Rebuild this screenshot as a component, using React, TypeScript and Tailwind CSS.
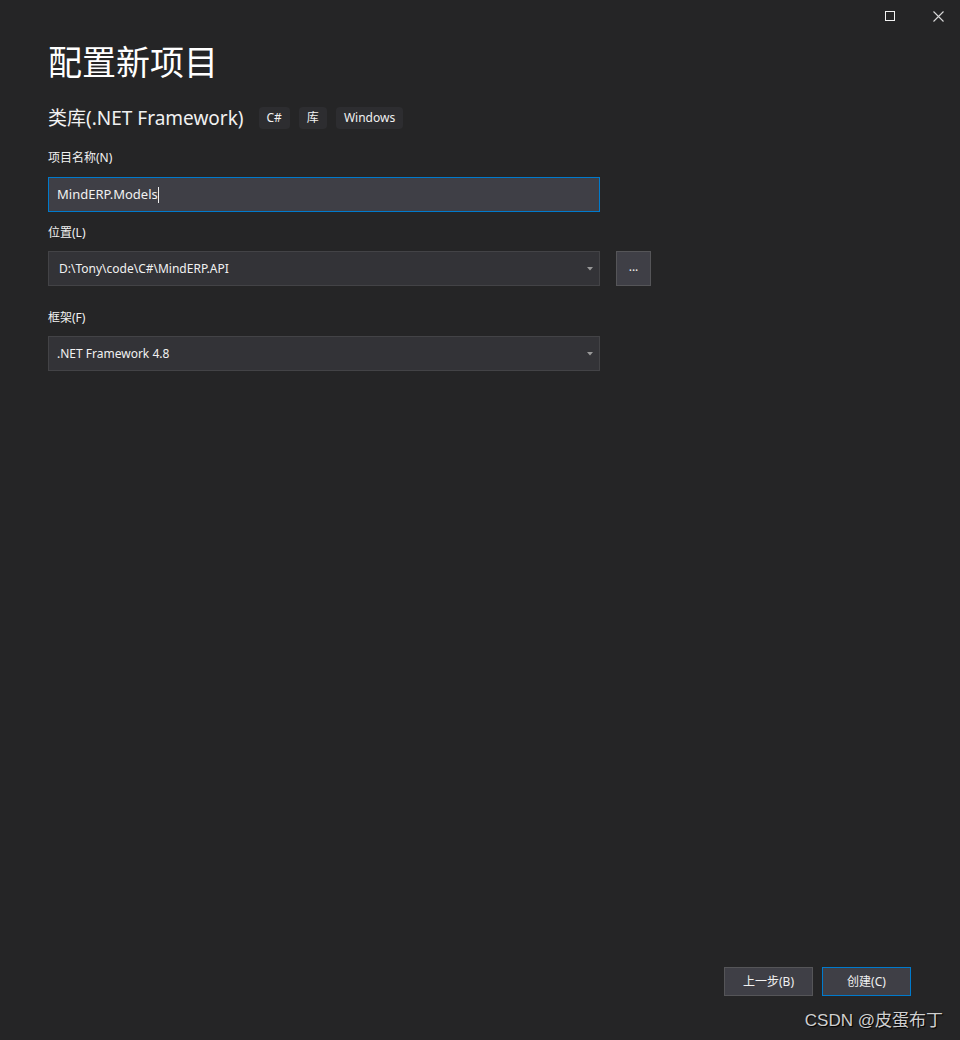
const font = { fontFamily: '"Noto Sans", "Noto Sans CJK SC", sans-serif' }

function Tag({ children }: { children: React.ReactNode }) {
  return (
    <span className="h-[22px] px-[8px] rounded-[4px] bg-[#2d2d30] text-[12px] text-[#f1f1f1] flex items-center">
      {children}
    </span>
  )
}

function Caret() {
  return (
    <svg width="6" height="4" viewBox="0 0 6 4" className="mr-[4px]">
      <path d="M0 0h6L3 3.5z" fill="#999999" />
    </svg>
  )
}

export default function App() {
  return (
    <div
      className="relative w-[960px] h-[1040px] bg-[#252526] text-[#f1f1f1] flex flex-col overflow-hidden"
      style={font}
    >
      {/* window controls */}
      <div className="absolute top-0 right-0 flex items-center">
        <div className="w-[48px] h-[32px] flex items-center justify-center">
          <div className="w-[10px] h-[10px] border border-[#f1f1f1]" />
        </div>
        <div className="w-[48px] h-[32px] flex items-center justify-center mr-[-2px]">
          <svg width="11" height="11" viewBox="0 0 11 11">
            <path d="M0.5 0.5l10 10M10.5 0.5l-10 10" stroke="#d8d8d8" strokeWidth="1.1" />
          </svg>
        </div>
      </div>

      <div className="px-[48px] pt-[40px] flex flex-col">
        <h1 className="text-[34px] leading-[44px] font-normal text-[#ffffff]">配置新项目</h1>

        <div className="mt-[23px] flex items-center h-[22px]">
          <span className="text-[19px] leading-[22px] text-[#f1f1f1] mr-[15px]">类库(.NET Framework)</span>
          <div className="flex gap-[9px]">
            <Tag>C#</Tag>
            <Tag>库</Tag>
            <Tag>Windows</Tag>
          </div>
        </div>

        <label className="mt-[21px] text-[12px] leading-[16px]">项目名称(N)</label>
        <div className="mt-[11px] w-[552px] h-[35px] bg-[#3f3f46] border border-[#007acc] flex items-center px-[8px] text-[13px]">
          <span>MindERP.Models</span>
          <span className="w-px h-[16px] bg-[#f1f1f1]" />
        </div>

        <label className="mt-[13px] text-[12px] leading-[16px]">位置(L)</label>
        <div className="mt-[10px] flex items-center gap-[16px]">
          <div className="w-[552px] h-[35px] bg-[#333337] border border-[#434346] flex items-center justify-between pl-[10px] pr-[2px] text-[12px]">
            <span>D:\Tony\code\C#\MindERP.API</span>
            <Caret />
          </div>
          <button className="w-[35px] h-[35px] bg-[#3f3f46] border border-[#555558] flex items-center justify-center text-[12px] leading-none pb-[4px]">
            ...
          </button>
        </div>

        <label className="mt-[24px] text-[12px] leading-[16px]">框架(F)</label>
        <div className="mt-[10px] w-[552px] h-[35px] bg-[#333337] border border-[#434346] flex items-center justify-between pl-[8px] pr-[2px] text-[12px]">
          <span>.NET Framework 4.8</span>
          <Caret />
        </div>
      </div>

      <div className="flex-1" />

      <div className="flex justify-end gap-[9px] pr-[49px] pb-[44px]">
        <button className="w-[89px] h-[29px] bg-[#3f3f46] border border-[#555558] text-[12px] text-[#f1f1f1]">
          上一步(B)
        </button>
        <button className="w-[89px] h-[29px] bg-[#3f3f46] border border-[#007acc] text-[12px] text-[#f1f1f1]">
          创建(C)
        </button>
      </div>

      <div
        className="absolute right-[17px] bottom-[8px] text-[17px] leading-[22px] text-[#d0d0d0] [text-shadow:1px_1px_1px_#000]"
        style={{ fontFamily: '"Liberation Sans", "Noto Sans CJK SC", sans-serif' }}
      >
        CSDN @皮蛋布丁
      </div>
    </div>
  )
}
